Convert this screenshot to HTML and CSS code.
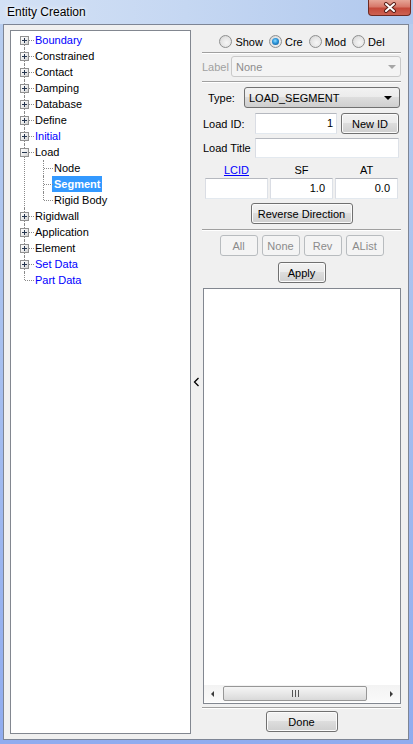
FILE: index.html
```html
<!DOCTYPE html>
<html lang="en">
<head>
  <meta charset="UTF-8" />
  <title>Entity Creation</title>
  <link rel="stylesheet" href="styles.css">
</head>
<body>
  <div class="window">
    <div class="titlebar">
      <span class="title">Entity Creation</span>
      <span class="close">
        <svg width="14" height="11" viewBox="0 0 14 11">
          <path d="M3 2 L11 9 M11 2 L3 9" stroke="#5b2019" stroke-width="4" stroke-linecap="round"/>
          <path d="M3 2 L11 9 M11 2 L3 9" stroke="#fff" stroke-width="2" stroke-linecap="round"/>
        </svg>
      </span>
    </div>

    <div class="client">
      <!-- keyword tree -->
      <div class="tree">
        <ul class="root">
          <li class="blue"><span class="exp plus"></span>Boundary</li>
          <li><span class="exp plus"></span>Constrained</li>
          <li><span class="exp plus"></span>Contact</li>
          <li><span class="exp plus"></span>Damping</li>
          <li><span class="exp plus"></span>Database</li>
          <li><span class="exp plus"></span>Define</li>
          <li class="blue"><span class="exp plus"></span>Initial</li>
          <li><span class="exp"></span>Load
            <ul class="sub">
              <li>Node</li>
              <li><span class="sel">Segment</span></li>
              <li>Rigid Body</li>
            </ul>
          </li>
          <li><span class="exp plus"></span>Rigidwall</li>
          <li><span class="exp plus"></span>Application</li>
          <li><span class="exp plus"></span>Element</li>
          <li class="blue"><span class="exp plus"></span>Set Data</li>
          <li class="blue">Part Data</li>
        </ul>
      </div>

      <div class="splitter">
        <svg width="7" height="10" viewBox="0 0 7 10">
          <polyline points="5.5,1 1.5,5 5.5,9" fill="none" stroke="#000" stroke-width="1.3"/>
        </svg>
      </div>

      <!-- entity form -->
      <div class="panel">
        <div class="modes">
          <label class="opt"><span class="radio"></span>Show</label>
          <label class="opt"><span class="radio on"></span>Cre</label>
          <label class="opt"><span class="radio"></span>Mod</label>
          <label class="opt"><span class="radio"></span>Del</label>
        </div>
        <div class="sep"></div>

        <div class="row label-row">
          <span class="lbl-dim">Label</span>
          <div class="combo off"><span>None</span><span class="arrow"></span></div>
        </div>
        <div class="sep gap4"></div>

        <div class="row type-row">
          <span class="lbl-type">Type:</span>
          <div class="combo"><span>LOAD_SEGMENT</span><span class="arrow"></span></div>
        </div>

        <div class="row id-row">
          <span class="lbl">Load ID:</span>
          <div class="field id-field">1</div>
          <button class="btn new-id">New ID</button>
        </div>

        <div class="row title-row">
          <span class="lbl">Load Title</span>
          <div class="field wide"></div>
        </div>

        <div class="cols head">
          <a class="link">LCID</a>
          <span>SF</span>
          <span>AT</span>
        </div>
        <div class="cols">
          <div class="field"></div>
          <div class="field num">1.0</div>
          <div class="field num">0.0</div>
        </div>

        <button class="btn reverse">Reverse Direction</button>
        <div class="sep gap5"></div>

        <div class="picks">
          <button class="btn off">All</button>
          <button class="btn off">None</button>
          <button class="btn off">Rev</button>
          <button class="btn off">AList</button>
        </div>
        <button class="btn apply">Apply</button>

        <div class="listbox">
          <div class="hscroll">
            <span class="sb-btn"><span class="tri-l"></span></span>
            <div class="sb-track">
              <div class="thumb">
                <svg width="7" height="7" viewBox="0 0 7 7">
                  <path d="M0.5 0 V7 M3.5 0 V7 M6.5 0 V7" stroke="#555" stroke-width="1"/>
                </svg>
              </div>
            </div>
            <span class="sb-btn"><span class="tri-r"></span></span>
          </div>
        </div>

        <div class="sep gap3"></div>
        <button class="btn done">Done</button>
      </div>
    </div>
  </div>
</body>
</html>
```

FILE: styles.css
```css
* {
  box-sizing: border-box;
}

body {
  margin: 0;
  width: 413px;
  height: 744px;
  overflow: hidden;
  font-family: "Liberation Sans", Arial, sans-serif;
  font-size: 11px;
  color: #000;
  background: linear-gradient(180deg, #c8d9f2 0px, #b7cdef 24px, #a6bfef 50%, #90acef 100%);
}

.window {
  display: flex;
  flex-direction: column;
  height: 744px;
}

/* title bar */
.titlebar {
  height: 24px;
  display: flex;
  justify-content: space-between;
  align-items: flex-start;
  background: linear-gradient(90deg, #d3e1f5 0%, #c5d7f2 45%, #b0c8ee 100%);
}

.title {
  font-size: 12px;
  line-height: 14px;
  padding: 5px 0 0 7px;
  text-shadow: 0 0 6px #fff, 0 0 3px #fff;
}

.close {
  width: 43px;
  height: 16px;
  margin-right: 2px;
  display: flex;
  align-items: center;
  justify-content: center;
  border: 1px solid #6e2a22;
  border-top: none;
  border-radius: 0 0 4px 4px;
  background: linear-gradient(#e6a597 0%, #d7786a 45%, #c4493a 55%, #cd6152 100%);
}

/* client area */
.client {
  flex: 1;
  margin: 0 4px 4px 3px;
  padding: 5px 7px 5px 6px;
  display: flex;
  border: 1px solid #7d8595;
  background: #f0f0f0;
}

/* tree */
.tree {
  width: 181px;
  padding-top: 1px;
  border: 1px solid #828790;
  background: #fff;
}

.tree ul {
  list-style: none;
  margin: 0;
  padding: 0;
}

.tree .root {
  padding-left: 9px;
}

.root > li {
  position: relative;
  padding-left: 15px;
  line-height: 16px;
  white-space: nowrap;
}

.root > li::before {
  content: "";
  position: absolute;
  left: 4px;
  top: 0;
  bottom: 0;
  border-left: 1px dotted #8a8a8a;
}

.root > li:first-child::before {
  top: 8px;
}

.root > li:last-child::before {
  bottom: auto;
  height: 8px;
}

.root > li::after {
  content: "";
  position: absolute;
  left: 5px;
  top: 8px;
  width: 9px;
  border-top: 1px dotted #8a8a8a;
}

.blue {
  color: #0000ff;
}

.exp {
  position: absolute;
  left: 0;
  top: 4px;
  width: 9px;
  height: 9px;
  z-index: 1;
  border: 1px solid #919191;
  background: linear-gradient(135deg, #ffffff 0%, #ebebeb 55%, #d2d2d2 100%);
}

.exp::before {
  content: "";
  position: absolute;
  left: 1px;
  top: 3px;
  width: 5px;
  height: 1px;
  background: #26364f;
}

.plus::after {
  content: "";
  position: absolute;
  left: 3px;
  top: 1px;
  width: 1px;
  height: 5px;
  background: #26364f;
}

.tree .sub {
  margin-left: 5px;
}

.sub li {
  position: relative;
  padding-left: 14px;
  line-height: 16px;
  color: #000;
}

.sub li::before {
  content: "";
  position: absolute;
  left: 3px;
  top: 0;
  bottom: 0;
  border-left: 1px dotted #8a8a8a;
}

.sub li:last-child::before {
  bottom: auto;
  height: 8px;
}

.sub li::after {
  content: "";
  position: absolute;
  left: 4px;
  top: 8px;
  width: 9px;
  border-top: 1px dotted #8a8a8a;
}

.sel {
  display: inline-block;
  margin-left: -2px;
  padding: 0 2px;
  line-height: 16px;
  background: #3399ff;
  color: #fff;
  font-weight: bold;
}

/* splitter */
.splitter {
  width: 11px;
  display: flex;
  align-items: center;
  justify-content: center;
}

/* right panel */
.panel {
  width: 199px;
  display: flex;
  flex-direction: column;
}

.modes {
  margin-top: 1px;
  height: 21px;
  display: flex;
  justify-content: center;
  align-items: center;
  gap: 6px;
  padding-left: 1px;
}

.opt {
  display: flex;
  align-items: center;
  gap: 3px;
}

.radio {
  position: relative;
  width: 13px;
  height: 13px;
  border-radius: 50%;
  border: 1px solid #8e8f8f;
  background: radial-gradient(circle at 60% 60%, #f6f6f6 0%, #e4e4e4 55%, #cbcbcb 100%);
}

.radio.on::after {
  content: "";
  position: absolute;
  left: 2px;
  top: 2px;
  width: 7px;
  height: 7px;
  border-radius: 50%;
  background: radial-gradient(circle at 45% 40%, #8fdcff 0%, #2a93d8 45%, #0d4d86 100%);
}

.sep {
  height: 2px;
  border-top: 1px solid #a0a0a0;
  border-bottom: 1px solid #fff;
}

.gap3 { margin-top: 3px; }
.gap4 { margin-top: 4px; }
.gap5 { margin-top: 5px; }

.row {
  display: flex;
  align-items: center;
  height: 21px;
}

.label-row {
  margin-top: 2px;
}

.lbl-dim {
  width: 29px;
  color: #a0a0a0;
}

.combo {
  flex: 1;
  height: 21px;
  display: flex;
  align-items: center;
  justify-content: space-between;
  padding: 0 7px 0 4px;
  border: 1px solid #707070;
  border-radius: 3px;
  background: linear-gradient(#f2f2f2 0%, #ebebeb 50%, #dddddd 50%, #cfcfcf 100%);
}

.combo.off {
  padding-right: 4px;
  border-color: #c9c9c9;
  background: #f4f4f4;
  color: #8d8d8d;
}

.arrow {
  width: 0;
  height: 0;
  border-left: 4px solid transparent;
  border-right: 4px solid transparent;
  border-top: 4px solid #000;
}

.combo.off .arrow {
  border-top-color: #a6a6a6;
}

.type-row {
  margin-top: 4px;
  padding: 0 1px 0 6px;
}

.lbl-type {
  width: 36px;
}

.id-row {
  margin-top: 5px;
  padding-left: 1px;
}

.lbl {
  width: 52px;
  flex-shrink: 0;
}

.field {
  height: 21px;
  line-height: 19px;
  padding: 0 7px 0 4px;
  text-align: right;
  background: #fff;
  border: 1px solid;
  border-color: #b5b8bf #dde1e7 #e3e9ef #dadde4;
}

.id-field {
  width: 82px;
  padding-right: 3px;
}

.title-row {
  margin-top: 4px;
  height: 20px;
  padding: 0 2px 0 1px;
}

.field.wide {
  flex: 1;
  height: 20px;
}

.btn {
  height: 21px;
  padding: 0;
  font: inherit;
  color: #000;
  border: 1px solid #707070;
  border-radius: 3px;
  background: linear-gradient(#f2f2f2 0%, #ebebeb 50%, #dddddd 50%, #cfcfcf 100%);
  box-shadow: inset 0 0 0 1px #fbfbfb;
}

.btn.off {
  color: #8b8b8b;
  border-color: #b8bcbf;
  background: #f4f4f4;
  box-shadow: none;
}

.new-id {
  width: 58px;
  margin-left: 4px;
}

.cols {
  display: grid;
  grid-template-columns: 63px 63px 63px;
  column-gap: 2px;
  padding-left: 3px;
}

.head {
  margin-top: 4px;
  height: 16px;
  line-height: 16px;
  text-align: center;
}

.link {
  color: #0000ff;
  text-decoration: underline;
}

.reverse {
  margin-top: 4px;
  width: 102px;
  align-self: center;
}

.picks {
  margin-top: 4px;
  display: flex;
  justify-content: center;
  gap: 4px;
}

.picks .btn {
  width: 38px;
}

.apply {
  margin-top: 6px;
  width: 48px;
  align-self: center;
}

/* result list */
.listbox {
  margin: 5px 0 0 1px;
  width: 198px;
  height: 416px;
  display: flex;
  flex-direction: column;
  justify-content: flex-end;
  padding-bottom: 1px;
  border: 1px solid #828790;
  background: #fff;
}

.hscroll {
  height: 17px;
  display: flex;
  background: linear-gradient(#f3f3f3, #fafafa);
}

.sb-btn {
  width: 17px;
  display: flex;
  align-items: center;
  justify-content: center;
}

.tri-l {
  border-top: 3px solid transparent;
  border-bottom: 3px solid transparent;
  border-right: 3px solid #3c3c3c;
}

.tri-r {
  border-top: 3px solid transparent;
  border-bottom: 3px solid transparent;
  border-left: 3px solid #3c3c3c;
}

.sb-track {
  flex: 1;
  display: flex;
  align-items: center;
  padding: 0 2px;
}

.thumb {
  width: 144px;
  height: 15px;
  display: flex;
  align-items: center;
  justify-content: center;
  border: 1px solid #979797;
  border-radius: 2px;
  background: linear-gradient(#f5f5f5 0%, #e8e8e8 50%, #d9d9d9 100%);
}

.done {
  margin-top: 2px;
  width: 72px;
  align-self: center;
}
```
